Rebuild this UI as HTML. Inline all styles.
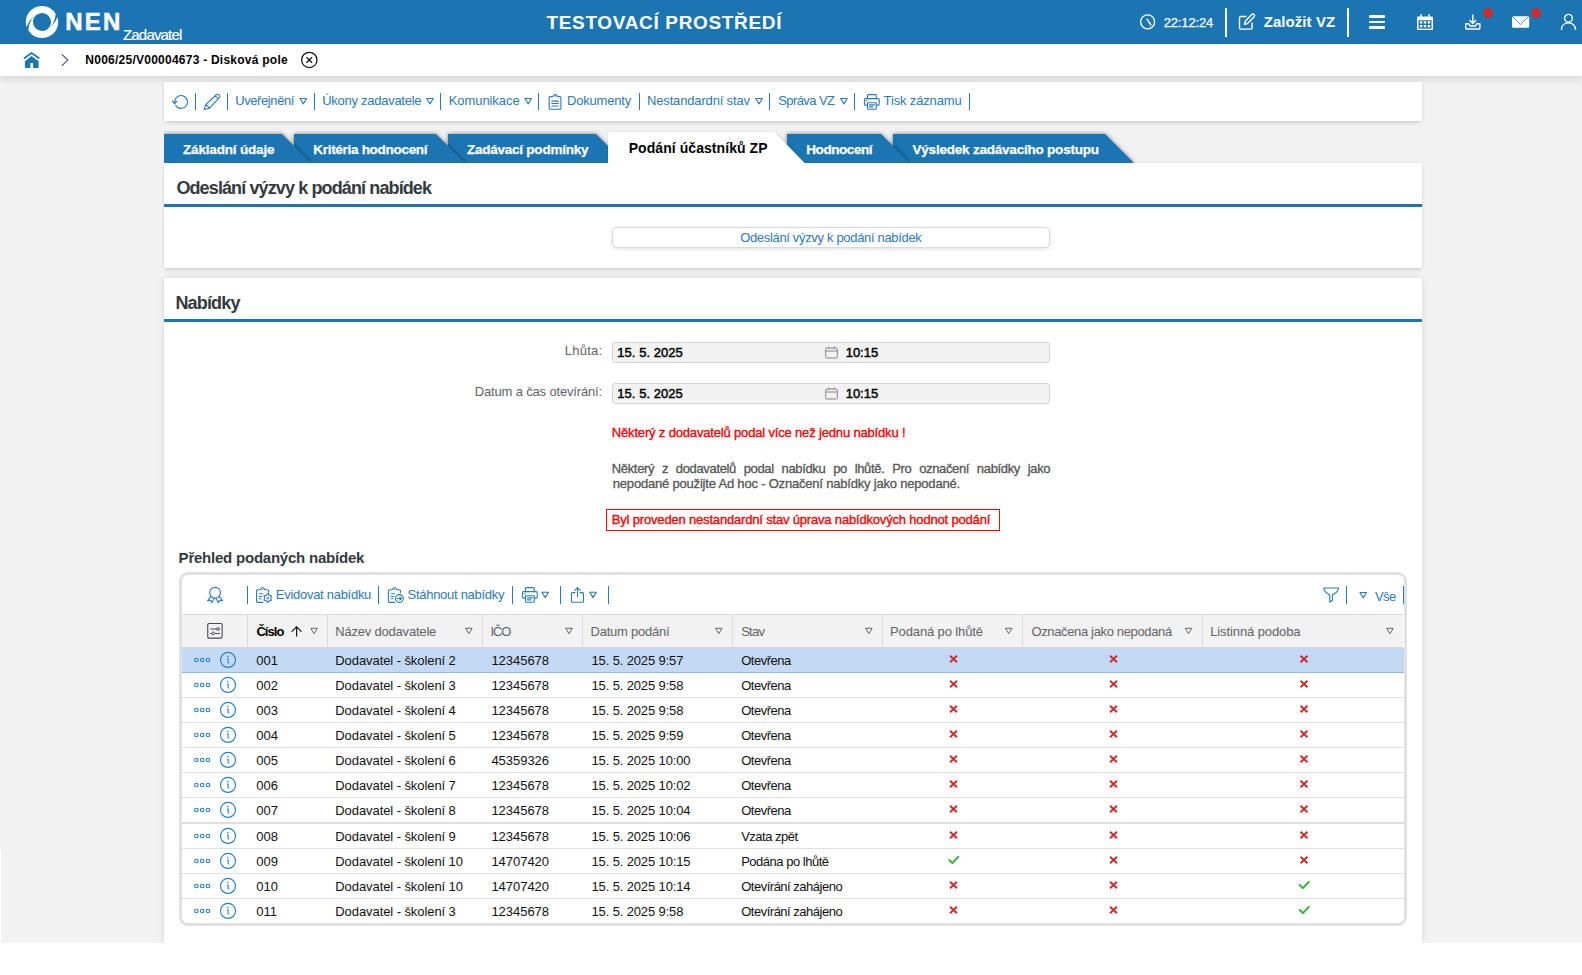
<!DOCTYPE html>
<html lang="cs"><head><meta charset="utf-8"><title>NEN - Zadavatel</title>
<style>
html,body{margin:0;padding:0}
body{width:1582px;height:975px;position:relative;overflow:hidden;background:#fff;font-family:"Liberation Sans",sans-serif}
.t{position:absolute;z-index:40;white-space:pre;line-height:16px;margin:0;font-weight:400;display:block}
h2.t,h3.t{font-weight:700}
.i{position:absolute;overflow:visible;display:block}
.sep{position:absolute;display:block}
.dot{position:absolute;display:block;width:10px;height:10px;border-radius:50%;background:#cc2b2b}
#bg{position:absolute;left:0;top:44px;width:1582px;height:899px;background:#f2f2f2}
#bgfix{position:absolute;left:0;top:849px;width:1px;height:94px;background:#fff}
#top{position:absolute;left:0;top:0;width:1582px;height:44px;background:#1c75b3}
#crumb{position:absolute;left:0;top:44px;width:1582px;height:32px;background:#fff;box-shadow:0 2px 10px rgba(0,0,0,.15)}
.panel{position:absolute;left:164px;width:1258px;background:#fff;box-shadow:0 3px 5px -2px rgba(0,0,0,.17),0 0 3px rgba(0,0,0,.1)}
.hl{position:absolute;left:164px;width:1258px;height:3px;background:#1c75b3}
.tab{position:absolute;top:14px;height:29px;filter:drop-shadow(0 0 2px rgba(0,0,0,.5))}
.tab b{display:block;width:100%;height:100%;background:#1c75b3;clip-path:polygon(0 0,calc(100% - 29px) 0,100% 100%,0 100%)}
.tab.act{top:12px;height:31px;filter:drop-shadow(1px 1px 1.5px rgba(0,0,0,.22))}
.tab.act b{background:#fff;clip-path:polygon(0 0,calc(100% - 30px) 0,100% 100%,0 100%)}
#tabclip{position:absolute;left:164px;top:120px;width:1258px;height:43px;overflow:hidden}
.btn{position:absolute;left:612px;top:227px;width:436px;height:19px;border:1px solid #dadada;border-radius:5px;background:#fff;box-shadow:0 1px 4px rgba(0,0,0,.13)}
.fld{position:absolute;left:612px;width:436px;height:19px;border:1px solid #d4d4d4;border-radius:3px;background:#f2f2f2}
.warn{position:absolute;left:606px;top:509px;width:392px;height:20px;border:1px solid #f00}
#grid{position:absolute;left:179px;top:572px;width:1222px;height:348px;border:3px solid #dfe1e3;border-radius:9px;background:#fff}
#ghead{position:absolute;left:182px;top:614px;width:1221px;height:32px;background:#f2f2f2;border-top:1px solid #dcdcdc;border-bottom:1px solid #d6d6d6}
.row{position:absolute;left:182px;width:1222px;height:24px;border-bottom:1px solid #e0e0e0}
.row.sel{background:#c4d9f4;border-bottom-color:#8fbcee}
</style></head>
<body>
<div id="bg"></div><div id="bgfix"></div>

<nav id="crumb"></nav>
<header id="top"></header>
<div class="hdr">
<svg class="i" style="left:25px;top:5px" width="34" height="34" viewBox="-0.9 -0.8 34 34" ><g fill="#fff"><path id="cr" d="M0.72 21.15A16 16 0 0 1 15.9 0.1A16 16 0 0 1 29.81 8.2Q28.5 19.6 21.92 23.13A9.05 9.05 0 1 0 9.7 9.8Q3.5 13.6 0.72 21.15z"/><path d="M0.72 21.15A16 16 0 0 1 15.9 0.1A16 16 0 0 1 29.81 8.2Q28.5 19.6 21.92 23.13A9.05 9.05 0 1 0 9.7 9.8Q3.5 13.6 0.72 21.15z" transform="rotate(180 16.1 16.2)"/></g></svg>
<span class="t" style="left:65.3px;top:8px;font-size:24px;line-height:27px;color:#fff;font-weight:700;letter-spacing:2.180px;-webkit-text-stroke:0.5px #fff;">NEN</span>
<span class="t" style="left:123.0px;top:26px;font-size:15px;line-height:17px;color:#fff;letter-spacing:-0.818px;-webkit-text-stroke:0.2px #fff;">Zadavatel</span>
<span class="t" style="left:546.5px;top:12px;font-size:19px;line-height:21px;color:#fff;font-weight:700;letter-spacing:0.660px;">TESTOVACÍ PROSTŘEDÍ</span>
<span class="t" style="left:1163.7px;top:15px;font-size:13px;line-height:15px;color:#fff;letter-spacing:-0.153px;-webkit-text-stroke:0.25px #fff;">22:12:24</span>
<span class="t" style="left:1263.7px;top:13px;font-size:15px;line-height:17px;color:#fff;font-weight:700;letter-spacing:0.070px;">Založit VZ</span>
<svg class="i" style="left:1139px;top:13px" width="18" height="18" viewBox="0 0 18 18" ><circle cx="8.6" cy="8.8" r="7" fill="none" stroke="#fff" stroke-width="1.3"/><path d="M8.1 6.3L11.9 12" fill="none" stroke="#fff" stroke-width="1.4" stroke-linecap="round"/></svg><i class="sep" style="left:1225px;top:8px;width:2px;height:29px;background:#fff"></i><svg class="i" style="left:1238px;top:13px" width="19" height="18" viewBox="-0.5 0 19 18" ><path d="M8 3.5H2.3a1.3 1.3 0 0 0-1.3 1.3v10a1.3 1.3 0 0 0 1.3 1.3h10a1.3 1.3 0 0 0 1.3-1.3V9.5" fill="none" stroke="#fff" stroke-width="1.4"/><path d="M13.2 1.6a1.6 1.6 0 0 1 2.4 2.2L9 10.6l-3 .8.7-3.1z" fill="none" stroke="#fff" stroke-width="1.4" stroke-linejoin="round"/></svg><i class="sep" style="left:1347px;top:8px;width:2px;height:29px;background:#fff"></i><i class="sep" style="left:1368.7px;top:15.1px;width:16.3px;height:2.8px;background:#fff;border-radius:1px"></i><i class="sep" style="left:1368.7px;top:20.5px;width:16.3px;height:2.8px;background:#fff;border-radius:1px"></i><i class="sep" style="left:1368.7px;top:25.9px;width:16.3px;height:2.8px;background:#fff;border-radius:1px"></i><svg class="i" style="left:1416px;top:14px" width="18" height="17" viewBox="-0.5 0 18 17" ><path d="M1.5 2.5h14a1 1 0 0 1 1 1v11.5a1 1 0 0 1-1 1h-14a1 1 0 0 1-1-1v-11.5a1 1 0 0 1 1-1z" fill="#fff"/><path d="M4.5 0.3v3M12.5 0.3v3" stroke="#fff" stroke-width="1.6"/><path d="M2 6.2h13v8.5h-13z" fill="#1c75b3"/><path d="M3.4 7.3h2.4v2.2h-2.4zM7.3 7.3h2.4v2.2h-2.4zM11.2 7.3h2.4v2.2h-2.4zM3.4 11h2.4v2.2h-2.4zM7.3 11h2.4v2.2h-2.4zM11.2 11h2.4v2.2h-2.4z" fill="#fff"/><path d="M3.8 1.2v1.8M13.2 1.2v1.8" stroke="#1c75b3" stroke-width="0.01"/></svg><svg class="i" style="left:1464px;top:13px" width="18" height="18" viewBox="-0.5 -0.5 18 18" ><path d="M8.3 1v8.5M5 6.6l3.3 3.3 3.3-3.3" fill="none" stroke="#fff" stroke-width="1.4"/><path d="M1.2 10.3h3.3l1 2.2h5.6l1-2.2h3.3v4.2a1 1 0 0 1-1 1H2.2a1 1 0 0 1-1-1z" fill="none" stroke="#fff" stroke-width="1.4" stroke-linejoin="round"/></svg><i class="dot" style="left:1483px;top:8px"></i><svg class="i" style="left:1512px;top:16px" width="18" height="12" viewBox="0 0 18 12" ><rect x="0" y="0.2" width="17.2" height="11.5" rx="1.5" fill="#fff"/><path d="M0.9 0.9l7.5 7.7 7.8-7.7" fill="none" stroke="#1c75b3" stroke-width="0.75"/></svg><i class="dot" style="left:1531px;top:8px"></i><svg class="i" style="left:1560px;top:13px" width="17" height="18" viewBox="-0.5 -0.5 17 18" ><circle cx="8" cy="4.8" r="3.9" fill="none" stroke="#fff" stroke-width="1.4"/><path d="M0.9 16.4c0-4.5 3.2-7 7.1-7s7.1 2.5 7.1 7" fill="none" stroke="#fff" stroke-width="1.4"/></svg>
</div>

<div class="crumb">
<svg class="i" style="left:23px;top:51px" width="18" height="18" viewBox="0 0 18 18" ><path d="M1.5 7L8.54 2.1 15.8 7" fill="none" stroke="#1c75b3" stroke-width="1.8" stroke-linecap="round" stroke-linejoin="miter"/><path d="M8.54 4.9L15.6 10.3V16.2a.7.7 0 0 1-.7.7H10.1V12H7.4v4.9H2.6a.7.7 0 0 1-.7-.7V10.3z" fill="#1c75b3"/></svg><svg class="i" style="left:60px;top:53px" width="10" height="14" viewBox="0 0 10 14" ><path d="M1.8 1.3l6 5.7-6 5.9" fill="none" stroke="#3b4a66" stroke-width="1.05"/></svg>
<span class="t" style="left:85.3px;top:53px;font-size:12px;line-height:14px;color:#000;font-weight:700;letter-spacing:0.245px;">N006/25/V00004673 - Disková pole</span>
<svg class="i" style="left:301px;top:51px" width="17" height="18" viewBox="0 -0.5 17 18" ><circle cx="8.3" cy="8.45" r="7.65" fill="none" stroke="#111" stroke-width="1.25"/><path d="M5.5 5.65l5.6 5.6M11.1 5.65l-5.6 5.6" stroke="#111" stroke-width="1.3"/></svg>
</div>

<div class="panel" style="top:82px;height:39px"></div>
<div class="toolbar">
<svg class="i" style="left:171px;top:94px" width="19" height="16" viewBox="-0.3 0 19 16" ><path d="M3.53 9.28A6.4 6.4 0 1 1 4.29 11.25" fill="none" stroke="#2a7ab8" stroke-width="1.1" stroke-linecap="round" stroke-linejoin="round"/><path d="M1 7.2l2.35 2.3 2.35-2.3" fill="none" stroke="#2a7ab8" stroke-width="1.1" stroke-linecap="round" stroke-linejoin="round"/></svg><i class="sep" style="left:195px;top:93px;width:1px;height:17px;background:#2a7ab8"></i><svg class="i" style="left:203px;top:93px" width="18" height="18" viewBox="-0.5 -0.5 18 18" ><path d="M13.1 1a2.2 2.2 0 0 1 3 2.9L6 14.7 0.8 16 2.4 10.8zM11.7 2.3l3.2 3M2.4 10.8L6 14.7" fill="none" stroke="#2a7ab8" stroke-width="1.1" stroke-linecap="round" stroke-linejoin="round"/></svg><i class="sep" style="left:227px;top:93px;width:1px;height:17px;background:#2a7ab8"></i><svg class="i" style="left:299px;top:97px" width="9" height="8" viewBox="-0.3 -0.9 9 8" ><path d="M0.7 0.6h6.6L4 6z" fill="none" stroke="#2a7ab8" stroke-width="1.1" stroke-linejoin="round"/></svg><i class="sep" style="left:314px;top:93px;width:1px;height:17px;background:#2a7ab8"></i><svg class="i" style="left:426px;top:97px" width="8" height="8" viewBox="0 -0.9 8 8" ><path d="M0.7 0.6h6.6L4 6z" fill="none" stroke="#2a7ab8" stroke-width="1.1" stroke-linejoin="round"/></svg><i class="sep" style="left:440px;top:93px;width:1px;height:17px;background:#2a7ab8"></i><svg class="i" style="left:524px;top:97px" width="9" height="8" viewBox="-0.2 -0.9 9 8" ><path d="M0.7 0.6h6.6L4 6z" fill="none" stroke="#2a7ab8" stroke-width="1.1" stroke-linejoin="round"/></svg><i class="sep" style="left:538px;top:93px;width:1px;height:17px;background:#2a7ab8"></i><svg class="i" style="left:548px;top:93px" width="15" height="18" viewBox="0 -0.5 15 18" ><path d="M4.4 3.15H2.15a1 1 0 0 0-1 1V14.7a1 1 0 0 0 1 1h9.8a1 1 0 0 0 1-1V4.15a1 1 0 0 0-1-1H9.96M4.4 3.15C5.3 3.15 5.5 1.15 7.2 1.15S9.1 3.15 9.96 3.15" fill="none" stroke="#2a7ab8" stroke-width="1.1" stroke-linecap="round" stroke-linejoin="round"/><circle cx="7.2" cy="3.1" r="0.6" fill="#2a7ab8"/><path d="M3.8 7.6h6.6M3.8 10h6.6M3.8 12.5h6.6" fill="none" stroke="#2a7ab8" stroke-width="1.1" stroke-linecap="round" stroke-linejoin="round"/></svg><i class="sep" style="left:639px;top:93px;width:1px;height:17px;background:#2a7ab8"></i><svg class="i" style="left:755px;top:97px" width="8" height="8" viewBox="0 -0.9 8 8" ><path d="M0.7 0.6h6.6L4 6z" fill="none" stroke="#2a7ab8" stroke-width="1.1" stroke-linejoin="round"/></svg><i class="sep" style="left:769px;top:93px;width:1px;height:17px;background:#2a7ab8"></i><svg class="i" style="left:839px;top:97px" width="9" height="8" viewBox="-0.9 -0.9 9 8" ><path d="M0.7 0.6h6.6L4 6z" fill="none" stroke="#2a7ab8" stroke-width="1.1" stroke-linejoin="round"/></svg><i class="sep" style="left:854px;top:93px;width:1px;height:17px;background:#2a7ab8"></i><svg class="i" style="left:862px;top:93px" width="19" height="18" viewBox="-0.8 -0.5 19 18" ><path d="M4.65 5.15V1.95a.8.8 0 0 1 .8-.8h7.2a.8.8 0 0 1 .8.8v3.2" fill="none" stroke="#2a7ab8" stroke-width="1.1" stroke-linecap="round" stroke-linejoin="round"/><rect x="1.65" y="5.15" width="14.8" height="6.5" rx="1.1" fill="none" stroke="#2a7ab8" stroke-width="1.1" stroke-linecap="round" stroke-linejoin="round"/><path d="M4.65 9.25h8.8v5.7a.8.8 0 0 1-.8.8h-7.2a.8.8 0 0 1-.8-.8z" fill="#fff" stroke="#2a7ab8" stroke-width="1.1" stroke-linejoin="round"/><path d="M6.5 11.4h5.2M6.5 13.4h3.6M3.4 7.25h.9" fill="none" stroke="#2a7ab8" stroke-width="1.1" stroke-linecap="round" stroke-linejoin="round"/></svg><i class="sep" style="left:969px;top:93px;width:1px;height:17px;background:#2a7ab8"></i>
<span class="t" style="left:235.2px;top:93px;font-size:13px;line-height:15px;color:#2a7ab8;letter-spacing:-0.406px;">Uveřejnění</span>
<span class="t" style="left:322.2px;top:93px;font-size:13px;line-height:15px;color:#2a7ab8;letter-spacing:-0.267px;">Úkony zadavatele</span>
<span class="t" style="left:448.7px;top:93px;font-size:13px;line-height:15px;color:#2a7ab8;letter-spacing:-0.068px;">Komunikace</span>
<span class="t" style="left:567.0px;top:93px;font-size:13px;line-height:15px;color:#2a7ab8;letter-spacing:-0.181px;">Dokumenty</span>
<span class="t" style="left:647.0px;top:93px;font-size:13px;line-height:15px;color:#2a7ab8;letter-spacing:-0.157px;">Nestandardní stav</span>
<span class="t" style="left:778.3px;top:93px;font-size:13px;line-height:15px;color:#2a7ab8;letter-spacing:-0.597px;">Správa VZ</span>
<span class="t" style="left:883.6px;top:93px;font-size:13px;line-height:15px;color:#2a7ab8;letter-spacing:-0.153px;">Tisk záznamu</span>
</div>

<div class="panel" style="top:163px;height:105px"></div>
<div class="tabs">
<div id="tabclip"><div class="tab" style="left:0px;width:147px;z-index:20"><b></b></div><div class="tab" style="left:130px;width:171px;z-index:19"><b></b></div><div class="tab" style="left:284px;width:177px;z-index:18"><b></b></div><div class="tab" style="left:623px;width:123px;z-index:17"><b></b></div><div class="tab" style="left:729px;width:241px;z-index:16"><b></b></div><div class="tab act" style="left:444px;width:196.6px;z-index:30"><b></b></div></div>
<span class="t" style="left:183.0px;top:142px;font-size:13.5px;line-height:15px;color:#fff;font-weight:700;letter-spacing:-0.174px;-webkit-text-stroke:0.25px #fff;">Základní údaje</span>
<span class="t" style="left:313.3px;top:142px;font-size:13.5px;line-height:15px;color:#fff;font-weight:700;letter-spacing:-0.295px;-webkit-text-stroke:0.25px #fff;">Kritéria hodnocení</span>
<span class="t" style="left:466.9px;top:142px;font-size:13.5px;line-height:15px;color:#fff;font-weight:700;letter-spacing:-0.230px;-webkit-text-stroke:0.25px #fff;">Zadávací podmínky</span>
<span class="t" style="left:806.3px;top:142px;font-size:13.5px;line-height:15px;color:#fff;font-weight:700;letter-spacing:-0.437px;-webkit-text-stroke:0.25px #fff;">Hodnocení</span>
<span class="t" style="left:912.5px;top:142px;font-size:13.5px;line-height:15px;color:#fff;font-weight:700;letter-spacing:-0.212px;-webkit-text-stroke:0.25px #fff;">Výsledek zadávacího postupu</span>
<span class="t" style="left:628.7px;top:140px;font-size:14px;line-height:16px;color:#000;font-weight:700;letter-spacing:0.064px;">Podání účastníků ZP</span>
</div>
<section class="p1">
<div class="hl" style="top:204px"></div>
<div class="btn"></div>
<h2 class="t" style="left:176.4px;top:178px;font-size:18px;line-height:20px;color:#333a40;font-weight:700;letter-spacing:-0.883px;">Odeslání výzvy k podání nabídek</h2>
<span class="t" style="left:740.2px;top:230px;font-size:13px;line-height:15px;color:#2a7ab8;letter-spacing:-0.330px;">Odeslání výzvy k podání nabídek</span>
</section>

<div class="panel" style="top:278px;height:665px;box-shadow:0 0 6px rgba(0,0,0,.12)"></div>
<div style="position:absolute;left:0;top:943px;width:1582px;height:32px;background:#fff"></div>
<section class="p2">
<div class="hl" style="top:319px"></div>
<div class="fld" style="top:342px"></div>
<div class="fld" style="top:383px"></div>
<svg class="i" style="left:825px;top:346px" width="14" height="13" viewBox="-0.1 -0.3 14 13" ><rect x="0.6" y="1.7" width="11.6" height="10" rx="1" fill="none" stroke="#888" stroke-width="1"/><path d="M0.6 4.7h11.6M3.7 0.3v2.4M9.1 0.3v2.4" stroke="#888" stroke-width="1"/></svg><svg class="i" style="left:825px;top:387px" width="14" height="13" viewBox="-0.1 -0.3 14 13" ><rect x="0.6" y="1.7" width="11.6" height="10" rx="1" fill="none" stroke="#888" stroke-width="1"/><path d="M0.6 4.7h11.6M3.7 0.3v2.4M9.1 0.3v2.4" stroke="#888" stroke-width="1"/></svg>
<div class="warn"></div>
<h2 class="t" style="left:175.4px;top:293px;font-size:18px;line-height:20px;color:#333a40;font-weight:700;letter-spacing:-0.835px;">Nabídky</h2>
<span class="t" style="left:564.7px;top:343px;font-size:13px;line-height:15px;color:#626268;letter-spacing:0.274px;">Lhůta:</span>
<span class="t" style="left:474.7px;top:384px;font-size:13px;line-height:15px;color:#626268;letter-spacing:-0.156px;">Datum a čas otevírání:</span>
<span class="t" style="left:617.3px;top:345px;font-size:13px;line-height:15px;color:#000;letter-spacing:0.037px;-webkit-text-stroke:0.45px #000;">15. 5. 2025</span>
<span class="t" style="left:845.7px;top:345px;font-size:13px;line-height:15px;color:#000;letter-spacing:-0.025px;-webkit-text-stroke:0.45px #000;">10:15</span>
<span class="t" style="left:617.3px;top:386px;font-size:13px;line-height:15px;color:#000;letter-spacing:0.037px;-webkit-text-stroke:0.45px #000;">15. 5. 2025</span>
<span class="t" style="left:845.7px;top:386px;font-size:13px;line-height:15px;color:#000;letter-spacing:-0.025px;-webkit-text-stroke:0.45px #000;">10:15</span>
<span class="t" style="left:611.8px;top:425px;font-size:13px;line-height:15px;color:#f00;letter-spacing:-0.167px;-webkit-text-stroke:0.35px #f00;">Některý z dodavatelů podal více než jednu nabídku !</span>
<span class="t" style="left:611.8px;top:461px;font-size:13px;line-height:15px;color:#555;letter-spacing:-0.350px;word-spacing:4.516px;-webkit-text-stroke:0.3px #555;">Některý z dodavatelů podal nabídku po lhůtě. Pro označení nabídky jako</span>
<span class="t" style="left:612.8px;top:476px;font-size:13px;line-height:15px;color:#555;letter-spacing:-0.196px;-webkit-text-stroke:0.3px #555;">nepodané použijte Ad hoc - Označení nabídky jako nepodané.</span>
<span class="t" style="left:611.8px;top:512px;font-size:13px;line-height:15px;color:#f00;letter-spacing:-0.178px;-webkit-text-stroke:0.35px #f00;">Byl proveden nestandardní stav úprava nabídkových hodnot podání</span>
<h3 class="t" style="left:178.6px;top:549px;font-size:15px;line-height:17px;color:#333a40;font-weight:700;letter-spacing:-0.223px;">Přehled podaných nabídek</h3>
</section>

<div id="grid"></div>
<div class="gtb">
<svg class="i" style="left:206px;top:586px" width="18" height="18" viewBox="-0.5 -0.5 18 18" ><circle cx="8.6" cy="6.3" r="5.4" fill="none" stroke="#2a7ab8" stroke-width="1.1" stroke-linecap="round" stroke-linejoin="round"/><path d="M4.5 9.8L1.2 14.2l3.1-.4 1 2.5 2.6-4.5M12.7 9.8l3.3 4.4-3.1-.4-1 2.5-2.6-4.5" fill="none" stroke="#2a7ab8" stroke-width="1.1" stroke-linecap="round" stroke-linejoin="round"/></svg><i class="sep" style="left:247px;top:586px;width:1px;height:18px;background:#2a7ab8"></i><svg class="i" style="left:255px;top:586px" width="18" height="18" viewBox="-0.5 -0.5 18 18" ><path d="M4.7 3.25H2.05a1 1 0 0 0-1 1V14.85a1 1 0 0 0 1 1H7.3M9.6 3.25h2.45a1 1 0 0 1 1 1V6.7 M4.7 3.25C5.5 3.25 5.6 0.95 7.15 0.95S8.8 3.25 9.6 3.25" fill="none" stroke="#2a7ab8" stroke-width="1.1" stroke-linecap="round" stroke-linejoin="round"/><circle cx="7.1" cy="3.1" r="0.55" fill="#2a7ab8"/><path d="M4 7.3h3.3M3.7 10h2.5M4 12.3h1.6" fill="none" stroke="#2a7ab8" stroke-width="1.1" stroke-linecap="round" stroke-linejoin="round"/><path d="M12.2 7.25L13.72 8.91L15.92 9.4L15.25 11.55L15.92 13.7L13.72 14.19L12.2 15.85L10.68 14.19L8.48 13.7L9.15 11.55L8.48 9.4L10.67 8.91z" fill="none" stroke="#2a7ab8" stroke-width="1.1" stroke-linecap="round" stroke-linejoin="round"/><circle cx="12.2" cy="11.55" r="0.9" fill="none" stroke="#2a7ab8" stroke-width="1"/></svg><i class="sep" style="left:378px;top:586px;width:1px;height:18px;background:#2a7ab8"></i><svg class="i" style="left:387px;top:586px" width="18" height="18" viewBox="-0.35 -0.5 18 18" ><path d="M4.7 3.25H2.05a1 1 0 0 0-1 1V14.85a1 1 0 0 0 1 1H7.3M9.6 3.25h2.45a1 1 0 0 1 1 1V6.1 M4.7 3.25C5.5 3.25 5.6 0.95 7.15 0.95S8.8 3.25 9.6 3.25" fill="none" stroke="#2a7ab8" stroke-width="1.1" stroke-linecap="round" stroke-linejoin="round"/><circle cx="7.1" cy="3.1" r="0.55" fill="#2a7ab8"/><path d="M4 7.3h3.3M3.7 10h2.5M4 12.3h1.6" fill="none" stroke="#2a7ab8" stroke-width="1.1" stroke-linecap="round" stroke-linejoin="round"/><circle cx="12.05" cy="12" r="3.9" fill="none" stroke="#2a7ab8" stroke-width="1.1" stroke-linecap="round" stroke-linejoin="round"/><path d="M9.9 12h4M12.5 10.5l1.6 1.5-1.6 1.5" fill="none" stroke="#2a7ab8" stroke-width="1.1" stroke-linecap="round" stroke-linejoin="round"/></svg><i class="sep" style="left:512px;top:586px;width:1px;height:18px;background:#2a7ab8"></i><svg class="i" style="left:520px;top:586px" width="19" height="18" viewBox="-0.8 -0.5 19 18" ><path d="M4.65 5.15V1.95a.8.8 0 0 1 .8-.8h7.2a.8.8 0 0 1 .8.8v3.2" fill="none" stroke="#2a7ab8" stroke-width="1.1" stroke-linecap="round" stroke-linejoin="round"/><rect x="1.65" y="5.15" width="14.8" height="6.5" rx="1.1" fill="none" stroke="#2a7ab8" stroke-width="1.1" stroke-linecap="round" stroke-linejoin="round"/><path d="M4.65 9.25h8.8v5.7a.8.8 0 0 1-.8.8h-7.2a.8.8 0 0 1-.8-.8z" fill="#fff" stroke="#2a7ab8" stroke-width="1.1" stroke-linejoin="round"/><path d="M6.5 11.4h5.2M6.5 13.4h3.6M3.4 7.25h.9" fill="none" stroke="#2a7ab8" stroke-width="1.1" stroke-linecap="round" stroke-linejoin="round"/></svg><svg class="i" style="left:541px;top:591px" width="9" height="8" viewBox="-0.2 -0.6 9 8" ><path d="M0.7 0.6h6.6L4 6z" fill="none" stroke="#2a7ab8" stroke-width="1.1" stroke-linejoin="round"/></svg><i class="sep" style="left:560px;top:586px;width:1px;height:18px;background:#2a7ab8"></i><svg class="i" style="left:570px;top:586px" width="15" height="18" viewBox="0 0 15 18" ><path d="M5 6.6H2.5a1 1 0 0 0-1 1v7.7a1 1 0 0 0 1 1h10a1 1 0 0 0 1-1V7.6a1 1 0 0 0-1-1H10" fill="none" stroke="#2a7ab8" stroke-width="1.1" stroke-linecap="round" stroke-linejoin="round"/><path d="M7.55 10.8V1.7M4.8 4.3l2.75-2.7 2.75 2.7" fill="none" stroke="#2a7ab8" stroke-width="1.1" stroke-linecap="round" stroke-linejoin="round"/></svg><svg class="i" style="left:589px;top:591px" width="8" height="8" viewBox="0 -0.6 8 8" ><path d="M0.7 0.6h6.6L4 6z" fill="none" stroke="#2a7ab8" stroke-width="1.1" stroke-linejoin="round"/></svg><i class="sep" style="left:608px;top:586px;width:1px;height:18px;background:#2a7ab8"></i><svg class="i" style="left:1322px;top:586px" width="18" height="18" viewBox="-0.5 -0.5 18 18" ><path d="M1.2 1.5H16C16 5.8 12 7 9.95 8.5V13.7L7.25 15.7V8.5C5.2 7 1.2 5.8 1.2 1.5z" fill="none" stroke="#2a7ab8" stroke-width="1.1" stroke-linecap="round" stroke-linejoin="round"/></svg><i class="sep" style="left:1346px;top:586px;width:1px;height:18px;background:#2a7ab8"></i><svg class="i" style="left:1359px;top:591px" width="9" height="8" viewBox="-0.2 -0.9 9 8" ><path d="M0.7 0.6h6.6L4 6z" fill="none" stroke="#2a7ab8" stroke-width="1.1" stroke-linejoin="round"/></svg><i class="sep" style="left:1403px;top:586px;width:1px;height:18px;background:#2a7ab8"></i>
<span class="t" style="left:275.8px;top:587px;font-size:13px;line-height:15px;color:#2a7ab8;letter-spacing:-0.280px;">Evidovat nabídku</span>
<span class="t" style="left:407.5px;top:587px;font-size:13px;line-height:15px;color:#2a7ab8;letter-spacing:-0.279px;">Stáhnout nabídky</span>
<span class="t" style="left:1375.0px;top:589px;font-size:13px;line-height:15px;color:#2a7ab8;letter-spacing:-0.585px;">Vše</span>
</div>
<div id="ghead"></div>
<div class="ghd">
<i class="sep" style="left:246.9px;top:615px;width:1px;height:32px;background:#dcdcdc"></i><i class="sep" style="left:327px;top:615px;width:1px;height:32px;background:#dcdcdc"></i><i class="sep" style="left:482px;top:615px;width:1px;height:32px;background:#dcdcdc"></i><i class="sep" style="left:581.9px;top:615px;width:1px;height:32px;background:#dcdcdc"></i><i class="sep" style="left:731.8px;top:615px;width:1px;height:32px;background:#dcdcdc"></i><i class="sep" style="left:881.8px;top:615px;width:1px;height:32px;background:#dcdcdc"></i><i class="sep" style="left:1021.5px;top:615px;width:1px;height:32px;background:#dcdcdc"></i><i class="sep" style="left:1201.8px;top:615px;width:1px;height:32px;background:#dcdcdc"></i><svg class="i" style="left:310px;top:627px" width="9" height="8" viewBox="-0.1 -0.7 9 8" ><path d="M0.7 0.6h6.6L4 6z" fill="none" stroke="#666" stroke-width="1" stroke-linejoin="round"/></svg><svg class="i" style="left:464px;top:627px" width="9" height="8" viewBox="-0.9 -0.7 9 8" ><path d="M0.7 0.6h6.6L4 6z" fill="none" stroke="#666" stroke-width="1" stroke-linejoin="round"/></svg><svg class="i" style="left:565px;top:627px" width="8" height="8" viewBox="-0 -0.7 8 8" ><path d="M0.7 0.6h6.6L4 6z" fill="none" stroke="#666" stroke-width="1" stroke-linejoin="round"/></svg><svg class="i" style="left:714px;top:627px" width="9" height="8" viewBox="-0.8 -0.7 9 8" ><path d="M0.7 0.6h6.6L4 6z" fill="none" stroke="#666" stroke-width="1" stroke-linejoin="round"/></svg><svg class="i" style="left:864px;top:627px" width="9" height="8" viewBox="-0.9 -0.7 9 8" ><path d="M0.7 0.6h6.6L4 6z" fill="none" stroke="#666" stroke-width="1" stroke-linejoin="round"/></svg><svg class="i" style="left:1004px;top:627px" width="9" height="8" viewBox="-0.7 -0.7 9 8" ><path d="M0.7 0.6h6.6L4 6z" fill="none" stroke="#666" stroke-width="1" stroke-linejoin="round"/></svg><svg class="i" style="left:1184px;top:627px" width="9" height="8" viewBox="-0.5 -0.7 9 8" ><path d="M0.7 0.6h6.6L4 6z" fill="none" stroke="#666" stroke-width="1" stroke-linejoin="round"/></svg><svg class="i" style="left:1385px;top:627px" width="9" height="8" viewBox="-0.9 -0.7 9 8" ><path d="M0.7 0.6h6.6L4 6z" fill="none" stroke="#666" stroke-width="1" stroke-linejoin="round"/></svg><svg class="i" style="left:206px;top:622px" width="18" height="18" viewBox="-0.5 -0.5 18 18" ><rect x="1.25" y="1.05" width="14.4" height="14.6" rx="1.2" fill="none" stroke="#4a4a55" stroke-width="1.1"/><path d="M3.8 6.5h6.2M12.8 6.5h.6M3.8 10.9h1.4M8 10.9h5.4" stroke="#4a4a55" stroke-width="1.05"/><circle cx="11.4" cy="6.5" r="1.35" fill="none" stroke="#4a4a55" stroke-width="1"/><circle cx="6.6" cy="10.9" r="1.35" fill="none" stroke="#4a4a55" stroke-width="1"/></svg><svg class="i" style="left:290px;top:624px" width="14" height="14" viewBox="-0.8 -0.8 14 14" ><path d="M5.8 11.7V2.2M0.9 6.9L5.8 2l4.9 4.9" fill="none" stroke="#111" stroke-width="1.15"/></svg>
<span class="t" style="left:256.4px;top:624px;font-size:13px;line-height:15px;color:#000;font-weight:700;letter-spacing:-0.960px;">Číslo</span>
<span class="t" style="left:335.2px;top:624px;font-size:13px;line-height:15px;color:#626268;letter-spacing:-0.196px;">Název dodavatele</span>
<span class="t" style="left:490.4px;top:624px;font-size:13px;line-height:15px;color:#626268;letter-spacing:-1.050px;">IČO</span>
<span class="t" style="left:590.5px;top:624px;font-size:13px;line-height:15px;color:#626268;letter-spacing:-0.232px;">Datum podání</span>
<span class="t" style="left:741.2px;top:624px;font-size:13px;line-height:15px;color:#626268;letter-spacing:-0.738px;">Stav</span>
<span class="t" style="left:890.0px;top:624px;font-size:13px;line-height:15px;color:#626268;letter-spacing:-0.119px;">Podaná po lhůtě</span>
<span class="t" style="left:1031.4px;top:624px;font-size:13px;line-height:15px;color:#626268;letter-spacing:-0.350px;">Označena jako nepodaná</span>
<span class="t" style="left:1210.2px;top:624px;font-size:13px;line-height:15px;color:#626268;letter-spacing:-0.105px;">Listinná podoba</span>
</div>
<div class="rows">
<div class="row sel" style="top:648px"></div><svg class="i" style="left:193px;top:653px" width="19" height="14" viewBox="-0.6 -0.8 19 14" ><circle cx="2.8" cy="6.2" r="1.75" fill="none" stroke="#2380c6" stroke-width="1.15"/><circle cx="8.6" cy="6.2" r="1.75" fill="none" stroke="#2380c6" stroke-width="1.15"/><circle cx="14.4" cy="6.2" r="1.75" fill="none" stroke="#2380c6" stroke-width="1.15"/></svg><svg class="i" style="left:219px;top:651px" width="18" height="18" viewBox="-0.5 -0.55 18 18" ><circle cx="8.5" cy="8.4" r="7.5" fill="none" stroke="#2380c6" stroke-width="1.15"/><path d="M7.5 7.4h1.1v3.3q0 .9 1.2.9" fill="none" stroke="#2380c6" stroke-width="1.1"/><circle cx="8.3" cy="4.9" r="0.8" fill="#2380c6"/></svg><svg class="i" style="left:948px;top:654px" width="11" height="10" viewBox="-0.5 0 11 10" ><path d="M1.55 1.7l6.9 6.6M8.45 1.7l-6.9 6.6" stroke="#cf2a2a" stroke-width="1.9"/></svg><svg class="i" style="left:1108px;top:654px" width="11" height="10" viewBox="-0.5 0 11 10" ><path d="M1.55 1.7l6.9 6.6M8.45 1.7l-6.9 6.6" stroke="#cf2a2a" stroke-width="1.9"/></svg><svg class="i" style="left:1299px;top:654px" width="10" height="10" viewBox="0 0 10 10" ><path d="M1.55 1.7l6.9 6.6M8.45 1.7l-6.9 6.6" stroke="#cf2a2a" stroke-width="1.9"/></svg><div class="row" style="top:673px"></div><svg class="i" style="left:193px;top:678px" width="19" height="14" viewBox="-0.6 -0.8 19 14" ><circle cx="2.8" cy="6.2" r="1.75" fill="none" stroke="#2380c6" stroke-width="1.15"/><circle cx="8.6" cy="6.2" r="1.75" fill="none" stroke="#2380c6" stroke-width="1.15"/><circle cx="14.4" cy="6.2" r="1.75" fill="none" stroke="#2380c6" stroke-width="1.15"/></svg><svg class="i" style="left:219px;top:676px" width="18" height="18" viewBox="-0.5 -0.55 18 18" ><circle cx="8.5" cy="8.4" r="7.5" fill="none" stroke="#2380c6" stroke-width="1.15"/><path d="M7.5 7.4h1.1v3.3q0 .9 1.2.9" fill="none" stroke="#2380c6" stroke-width="1.1"/><circle cx="8.3" cy="4.9" r="0.8" fill="#2380c6"/></svg><svg class="i" style="left:948px;top:679px" width="11" height="10" viewBox="-0.5 0 11 10" ><path d="M1.55 1.7l6.9 6.6M8.45 1.7l-6.9 6.6" stroke="#cf2a2a" stroke-width="1.9"/></svg><svg class="i" style="left:1108px;top:679px" width="11" height="10" viewBox="-0.5 0 11 10" ><path d="M1.55 1.7l6.9 6.6M8.45 1.7l-6.9 6.6" stroke="#cf2a2a" stroke-width="1.9"/></svg><svg class="i" style="left:1299px;top:679px" width="10" height="10" viewBox="0 0 10 10" ><path d="M1.55 1.7l6.9 6.6M8.45 1.7l-6.9 6.6" stroke="#cf2a2a" stroke-width="1.9"/></svg><div class="row" style="top:698px"></div><svg class="i" style="left:193px;top:703px" width="19" height="14" viewBox="-0.6 -0.8 19 14" ><circle cx="2.8" cy="6.2" r="1.75" fill="none" stroke="#2380c6" stroke-width="1.15"/><circle cx="8.6" cy="6.2" r="1.75" fill="none" stroke="#2380c6" stroke-width="1.15"/><circle cx="14.4" cy="6.2" r="1.75" fill="none" stroke="#2380c6" stroke-width="1.15"/></svg><svg class="i" style="left:219px;top:701px" width="18" height="18" viewBox="-0.5 -0.55 18 18" ><circle cx="8.5" cy="8.4" r="7.5" fill="none" stroke="#2380c6" stroke-width="1.15"/><path d="M7.5 7.4h1.1v3.3q0 .9 1.2.9" fill="none" stroke="#2380c6" stroke-width="1.1"/><circle cx="8.3" cy="4.9" r="0.8" fill="#2380c6"/></svg><svg class="i" style="left:948px;top:704px" width="11" height="10" viewBox="-0.5 0 11 10" ><path d="M1.55 1.7l6.9 6.6M8.45 1.7l-6.9 6.6" stroke="#cf2a2a" stroke-width="1.9"/></svg><svg class="i" style="left:1108px;top:704px" width="11" height="10" viewBox="-0.5 0 11 10" ><path d="M1.55 1.7l6.9 6.6M8.45 1.7l-6.9 6.6" stroke="#cf2a2a" stroke-width="1.9"/></svg><svg class="i" style="left:1299px;top:704px" width="10" height="10" viewBox="0 0 10 10" ><path d="M1.55 1.7l6.9 6.6M8.45 1.7l-6.9 6.6" stroke="#cf2a2a" stroke-width="1.9"/></svg><div class="row" style="top:723px"></div><svg class="i" style="left:193px;top:728px" width="19" height="14" viewBox="-0.6 -0.8 19 14" ><circle cx="2.8" cy="6.2" r="1.75" fill="none" stroke="#2380c6" stroke-width="1.15"/><circle cx="8.6" cy="6.2" r="1.75" fill="none" stroke="#2380c6" stroke-width="1.15"/><circle cx="14.4" cy="6.2" r="1.75" fill="none" stroke="#2380c6" stroke-width="1.15"/></svg><svg class="i" style="left:219px;top:726px" width="18" height="18" viewBox="-0.5 -0.55 18 18" ><circle cx="8.5" cy="8.4" r="7.5" fill="none" stroke="#2380c6" stroke-width="1.15"/><path d="M7.5 7.4h1.1v3.3q0 .9 1.2.9" fill="none" stroke="#2380c6" stroke-width="1.1"/><circle cx="8.3" cy="4.9" r="0.8" fill="#2380c6"/></svg><svg class="i" style="left:948px;top:729px" width="11" height="10" viewBox="-0.5 0 11 10" ><path d="M1.55 1.7l6.9 6.6M8.45 1.7l-6.9 6.6" stroke="#cf2a2a" stroke-width="1.9"/></svg><svg class="i" style="left:1108px;top:729px" width="11" height="10" viewBox="-0.5 0 11 10" ><path d="M1.55 1.7l6.9 6.6M8.45 1.7l-6.9 6.6" stroke="#cf2a2a" stroke-width="1.9"/></svg><svg class="i" style="left:1299px;top:729px" width="10" height="10" viewBox="0 0 10 10" ><path d="M1.55 1.7l6.9 6.6M8.45 1.7l-6.9 6.6" stroke="#cf2a2a" stroke-width="1.9"/></svg><div class="row" style="top:748px"></div><svg class="i" style="left:193px;top:753px" width="19" height="14" viewBox="-0.6 -0.8 19 14" ><circle cx="2.8" cy="6.2" r="1.75" fill="none" stroke="#2380c6" stroke-width="1.15"/><circle cx="8.6" cy="6.2" r="1.75" fill="none" stroke="#2380c6" stroke-width="1.15"/><circle cx="14.4" cy="6.2" r="1.75" fill="none" stroke="#2380c6" stroke-width="1.15"/></svg><svg class="i" style="left:219px;top:751px" width="18" height="18" viewBox="-0.5 -0.55 18 18" ><circle cx="8.5" cy="8.4" r="7.5" fill="none" stroke="#2380c6" stroke-width="1.15"/><path d="M7.5 7.4h1.1v3.3q0 .9 1.2.9" fill="none" stroke="#2380c6" stroke-width="1.1"/><circle cx="8.3" cy="4.9" r="0.8" fill="#2380c6"/></svg><svg class="i" style="left:948px;top:754px" width="11" height="10" viewBox="-0.5 0 11 10" ><path d="M1.55 1.7l6.9 6.6M8.45 1.7l-6.9 6.6" stroke="#cf2a2a" stroke-width="1.9"/></svg><svg class="i" style="left:1108px;top:754px" width="11" height="10" viewBox="-0.5 0 11 10" ><path d="M1.55 1.7l6.9 6.6M8.45 1.7l-6.9 6.6" stroke="#cf2a2a" stroke-width="1.9"/></svg><svg class="i" style="left:1299px;top:754px" width="10" height="10" viewBox="0 0 10 10" ><path d="M1.55 1.7l6.9 6.6M8.45 1.7l-6.9 6.6" stroke="#cf2a2a" stroke-width="1.9"/></svg><div class="row" style="top:773px"></div><svg class="i" style="left:193px;top:778px" width="19" height="14" viewBox="-0.6 -0.8 19 14" ><circle cx="2.8" cy="6.2" r="1.75" fill="none" stroke="#2380c6" stroke-width="1.15"/><circle cx="8.6" cy="6.2" r="1.75" fill="none" stroke="#2380c6" stroke-width="1.15"/><circle cx="14.4" cy="6.2" r="1.75" fill="none" stroke="#2380c6" stroke-width="1.15"/></svg><svg class="i" style="left:219px;top:776px" width="18" height="18" viewBox="-0.5 -0.55 18 18" ><circle cx="8.5" cy="8.4" r="7.5" fill="none" stroke="#2380c6" stroke-width="1.15"/><path d="M7.5 7.4h1.1v3.3q0 .9 1.2.9" fill="none" stroke="#2380c6" stroke-width="1.1"/><circle cx="8.3" cy="4.9" r="0.8" fill="#2380c6"/></svg><svg class="i" style="left:948px;top:779px" width="11" height="10" viewBox="-0.5 0 11 10" ><path d="M1.55 1.7l6.9 6.6M8.45 1.7l-6.9 6.6" stroke="#cf2a2a" stroke-width="1.9"/></svg><svg class="i" style="left:1108px;top:779px" width="11" height="10" viewBox="-0.5 0 11 10" ><path d="M1.55 1.7l6.9 6.6M8.45 1.7l-6.9 6.6" stroke="#cf2a2a" stroke-width="1.9"/></svg><svg class="i" style="left:1299px;top:779px" width="10" height="10" viewBox="0 0 10 10" ><path d="M1.55 1.7l6.9 6.6M8.45 1.7l-6.9 6.6" stroke="#cf2a2a" stroke-width="1.9"/></svg><div class="row" style="top:798px"></div><svg class="i" style="left:193px;top:803px" width="19" height="14" viewBox="-0.6 -0.8 19 14" ><circle cx="2.8" cy="6.2" r="1.75" fill="none" stroke="#2380c6" stroke-width="1.15"/><circle cx="8.6" cy="6.2" r="1.75" fill="none" stroke="#2380c6" stroke-width="1.15"/><circle cx="14.4" cy="6.2" r="1.75" fill="none" stroke="#2380c6" stroke-width="1.15"/></svg><svg class="i" style="left:219px;top:801px" width="18" height="18" viewBox="-0.5 -0.55 18 18" ><circle cx="8.5" cy="8.4" r="7.5" fill="none" stroke="#2380c6" stroke-width="1.15"/><path d="M7.5 7.4h1.1v3.3q0 .9 1.2.9" fill="none" stroke="#2380c6" stroke-width="1.1"/><circle cx="8.3" cy="4.9" r="0.8" fill="#2380c6"/></svg><svg class="i" style="left:948px;top:804px" width="11" height="10" viewBox="-0.5 0 11 10" ><path d="M1.55 1.7l6.9 6.6M8.45 1.7l-6.9 6.6" stroke="#cf2a2a" stroke-width="1.9"/></svg><svg class="i" style="left:1108px;top:804px" width="11" height="10" viewBox="-0.5 0 11 10" ><path d="M1.55 1.7l6.9 6.6M8.45 1.7l-6.9 6.6" stroke="#cf2a2a" stroke-width="1.9"/></svg><svg class="i" style="left:1299px;top:804px" width="10" height="10" viewBox="0 0 10 10" ><path d="M1.55 1.7l6.9 6.6M8.45 1.7l-6.9 6.6" stroke="#cf2a2a" stroke-width="1.9"/></svg><div class="row" style="top:824px"></div><svg class="i" style="left:193px;top:829px" width="19" height="14" viewBox="-0.6 -0.8 19 14" ><circle cx="2.8" cy="6.2" r="1.75" fill="none" stroke="#2380c6" stroke-width="1.15"/><circle cx="8.6" cy="6.2" r="1.75" fill="none" stroke="#2380c6" stroke-width="1.15"/><circle cx="14.4" cy="6.2" r="1.75" fill="none" stroke="#2380c6" stroke-width="1.15"/></svg><svg class="i" style="left:219px;top:827px" width="18" height="18" viewBox="-0.5 -0.55 18 18" ><circle cx="8.5" cy="8.4" r="7.5" fill="none" stroke="#2380c6" stroke-width="1.15"/><path d="M7.5 7.4h1.1v3.3q0 .9 1.2.9" fill="none" stroke="#2380c6" stroke-width="1.1"/><circle cx="8.3" cy="4.9" r="0.8" fill="#2380c6"/></svg><svg class="i" style="left:948px;top:830px" width="11" height="10" viewBox="-0.5 0 11 10" ><path d="M1.55 1.7l6.9 6.6M8.45 1.7l-6.9 6.6" stroke="#cf2a2a" stroke-width="1.9"/></svg><svg class="i" style="left:1108px;top:830px" width="11" height="10" viewBox="-0.5 0 11 10" ><path d="M1.55 1.7l6.9 6.6M8.45 1.7l-6.9 6.6" stroke="#cf2a2a" stroke-width="1.9"/></svg><svg class="i" style="left:1299px;top:830px" width="10" height="10" viewBox="0 0 10 10" ><path d="M1.55 1.7l6.9 6.6M8.45 1.7l-6.9 6.6" stroke="#cf2a2a" stroke-width="1.9"/></svg><div class="row" style="top:849px"></div><svg class="i" style="left:193px;top:854px" width="19" height="14" viewBox="-0.6 -0.8 19 14" ><circle cx="2.8" cy="6.2" r="1.75" fill="none" stroke="#2380c6" stroke-width="1.15"/><circle cx="8.6" cy="6.2" r="1.75" fill="none" stroke="#2380c6" stroke-width="1.15"/><circle cx="14.4" cy="6.2" r="1.75" fill="none" stroke="#2380c6" stroke-width="1.15"/></svg><svg class="i" style="left:219px;top:852px" width="18" height="18" viewBox="-0.5 -0.55 18 18" ><circle cx="8.5" cy="8.4" r="7.5" fill="none" stroke="#2380c6" stroke-width="1.15"/><path d="M7.5 7.4h1.1v3.3q0 .9 1.2.9" fill="none" stroke="#2380c6" stroke-width="1.1"/><circle cx="8.3" cy="4.9" r="0.8" fill="#2380c6"/></svg><svg class="i" style="left:947px;top:855px" width="13" height="10" viewBox="-0.5 0 13 10" ><path d="M1.7 5l3.2 3.2 5.9-6.4" fill="none" stroke="#2db432" stroke-width="1.9" stroke-linecap="round" stroke-linejoin="round"/></svg><svg class="i" style="left:1108px;top:855px" width="11" height="10" viewBox="-0.5 0 11 10" ><path d="M1.55 1.7l6.9 6.6M8.45 1.7l-6.9 6.6" stroke="#cf2a2a" stroke-width="1.9"/></svg><svg class="i" style="left:1299px;top:855px" width="10" height="10" viewBox="0 0 10 10" ><path d="M1.55 1.7l6.9 6.6M8.45 1.7l-6.9 6.6" stroke="#cf2a2a" stroke-width="1.9"/></svg><div class="row" style="top:874px"></div><svg class="i" style="left:193px;top:879px" width="19" height="14" viewBox="-0.6 -0.8 19 14" ><circle cx="2.8" cy="6.2" r="1.75" fill="none" stroke="#2380c6" stroke-width="1.15"/><circle cx="8.6" cy="6.2" r="1.75" fill="none" stroke="#2380c6" stroke-width="1.15"/><circle cx="14.4" cy="6.2" r="1.75" fill="none" stroke="#2380c6" stroke-width="1.15"/></svg><svg class="i" style="left:219px;top:877px" width="18" height="18" viewBox="-0.5 -0.55 18 18" ><circle cx="8.5" cy="8.4" r="7.5" fill="none" stroke="#2380c6" stroke-width="1.15"/><path d="M7.5 7.4h1.1v3.3q0 .9 1.2.9" fill="none" stroke="#2380c6" stroke-width="1.1"/><circle cx="8.3" cy="4.9" r="0.8" fill="#2380c6"/></svg><svg class="i" style="left:948px;top:880px" width="11" height="10" viewBox="-0.5 0 11 10" ><path d="M1.55 1.7l6.9 6.6M8.45 1.7l-6.9 6.6" stroke="#cf2a2a" stroke-width="1.9"/></svg><svg class="i" style="left:1108px;top:880px" width="11" height="10" viewBox="-0.5 0 11 10" ><path d="M1.55 1.7l6.9 6.6M8.45 1.7l-6.9 6.6" stroke="#cf2a2a" stroke-width="1.9"/></svg><svg class="i" style="left:1298px;top:880px" width="12" height="10" viewBox="0 0 12 10" ><path d="M1.7 5l3.2 3.2 5.9-6.4" fill="none" stroke="#2db432" stroke-width="1.9" stroke-linecap="round" stroke-linejoin="round"/></svg><div class="row" style="top:899px"></div><svg class="i" style="left:193px;top:904px" width="19" height="14" viewBox="-0.6 -0.8 19 14" ><circle cx="2.8" cy="6.2" r="1.75" fill="none" stroke="#2380c6" stroke-width="1.15"/><circle cx="8.6" cy="6.2" r="1.75" fill="none" stroke="#2380c6" stroke-width="1.15"/><circle cx="14.4" cy="6.2" r="1.75" fill="none" stroke="#2380c6" stroke-width="1.15"/></svg><svg class="i" style="left:219px;top:902px" width="18" height="18" viewBox="-0.5 -0.55 18 18" ><circle cx="8.5" cy="8.4" r="7.5" fill="none" stroke="#2380c6" stroke-width="1.15"/><path d="M7.5 7.4h1.1v3.3q0 .9 1.2.9" fill="none" stroke="#2380c6" stroke-width="1.1"/><circle cx="8.3" cy="4.9" r="0.8" fill="#2380c6"/></svg><svg class="i" style="left:948px;top:905px" width="11" height="10" viewBox="-0.5 0 11 10" ><path d="M1.55 1.7l6.9 6.6M8.45 1.7l-6.9 6.6" stroke="#cf2a2a" stroke-width="1.9"/></svg><svg class="i" style="left:1108px;top:905px" width="11" height="10" viewBox="-0.5 0 11 10" ><path d="M1.55 1.7l6.9 6.6M8.45 1.7l-6.9 6.6" stroke="#cf2a2a" stroke-width="1.9"/></svg><svg class="i" style="left:1298px;top:905px" width="12" height="10" viewBox="0 0 12 10" ><path d="M1.7 5l3.2 3.2 5.9-6.4" fill="none" stroke="#2db432" stroke-width="1.9" stroke-linecap="round" stroke-linejoin="round"/></svg><i class="sep" style="left:182px;top:822px;width:1222px;height:2px;background:#dedede"></i>
<span class="t c0" style="left:256.2px;top:653px;font-size:13px;line-height:15px;color:#111;letter-spacing:0.070px;">001</span>
<span class="t c1" style="left:335.3px;top:653px;font-size:13px;line-height:15px;color:#111;letter-spacing:-0.080px;">Dodavatel - školení 2</span>
<span class="t c2" style="left:491.4px;top:653px;font-size:13px;line-height:15px;color:#111;letter-spacing:-0.030px;">12345678</span>
<span class="t c3" style="left:591.5px;top:653px;font-size:13px;line-height:15px;color:#111;letter-spacing:-0.136px;">15. 5. 2025 9:57</span>
<span class="t c4" style="left:741.2px;top:653px;font-size:13px;line-height:15px;color:#111;letter-spacing:-0.492px;">Otevřena</span>
<span class="t c0" style="left:256.2px;top:678px;font-size:13px;line-height:15px;color:#111;letter-spacing:0.070px;">002</span>
<span class="t c1" style="left:335.3px;top:678px;font-size:13px;line-height:15px;color:#111;letter-spacing:-0.080px;">Dodavatel - školení 3</span>
<span class="t c2" style="left:491.4px;top:678px;font-size:13px;line-height:15px;color:#111;letter-spacing:-0.030px;">12345678</span>
<span class="t c3" style="left:591.5px;top:678px;font-size:13px;line-height:15px;color:#111;letter-spacing:-0.136px;">15. 5. 2025 9:58</span>
<span class="t c4" style="left:741.2px;top:678px;font-size:13px;line-height:15px;color:#111;letter-spacing:-0.492px;">Otevřena</span>
<span class="t c0" style="left:256.2px;top:703px;font-size:13px;line-height:15px;color:#111;letter-spacing:0.070px;">003</span>
<span class="t c1" style="left:335.3px;top:703px;font-size:13px;line-height:15px;color:#111;letter-spacing:-0.080px;">Dodavatel - školení 4</span>
<span class="t c2" style="left:491.4px;top:703px;font-size:13px;line-height:15px;color:#111;letter-spacing:-0.030px;">12345678</span>
<span class="t c3" style="left:591.5px;top:703px;font-size:13px;line-height:15px;color:#111;letter-spacing:-0.136px;">15. 5. 2025 9:58</span>
<span class="t c4" style="left:741.2px;top:703px;font-size:13px;line-height:15px;color:#111;letter-spacing:-0.492px;">Otevřena</span>
<span class="t c0" style="left:256.2px;top:728px;font-size:13px;line-height:15px;color:#111;letter-spacing:0.070px;">004</span>
<span class="t c1" style="left:335.3px;top:728px;font-size:13px;line-height:15px;color:#111;letter-spacing:-0.080px;">Dodavatel - školení 5</span>
<span class="t c2" style="left:491.4px;top:728px;font-size:13px;line-height:15px;color:#111;letter-spacing:-0.030px;">12345678</span>
<span class="t c3" style="left:591.5px;top:728px;font-size:13px;line-height:15px;color:#111;letter-spacing:-0.136px;">15. 5. 2025 9:59</span>
<span class="t c4" style="left:741.2px;top:728px;font-size:13px;line-height:15px;color:#111;letter-spacing:-0.492px;">Otevřena</span>
<span class="t c0" style="left:256.2px;top:753px;font-size:13px;line-height:15px;color:#111;letter-spacing:0.070px;">005</span>
<span class="t c1" style="left:335.3px;top:753px;font-size:13px;line-height:15px;color:#111;letter-spacing:-0.080px;">Dodavatel - školení 6</span>
<span class="t c2" style="left:491.4px;top:753px;font-size:13px;line-height:15px;color:#111;letter-spacing:-0.030px;">45359326</span>
<span class="t c3" style="left:591.5px;top:753px;font-size:13px;line-height:15px;color:#111;letter-spacing:-0.136px;">15. 5. 2025 10:00</span>
<span class="t c4" style="left:741.2px;top:753px;font-size:13px;line-height:15px;color:#111;letter-spacing:-0.492px;">Otevřena</span>
<span class="t c0" style="left:256.2px;top:778px;font-size:13px;line-height:15px;color:#111;letter-spacing:0.070px;">006</span>
<span class="t c1" style="left:335.3px;top:778px;font-size:13px;line-height:15px;color:#111;letter-spacing:-0.080px;">Dodavatel - školení 7</span>
<span class="t c2" style="left:491.4px;top:778px;font-size:13px;line-height:15px;color:#111;letter-spacing:-0.030px;">12345678</span>
<span class="t c3" style="left:591.5px;top:778px;font-size:13px;line-height:15px;color:#111;letter-spacing:-0.136px;">15. 5. 2025 10:02</span>
<span class="t c4" style="left:741.2px;top:778px;font-size:13px;line-height:15px;color:#111;letter-spacing:-0.492px;">Otevřena</span>
<span class="t c0" style="left:256.2px;top:803px;font-size:13px;line-height:15px;color:#111;letter-spacing:0.070px;">007</span>
<span class="t c1" style="left:335.3px;top:803px;font-size:13px;line-height:15px;color:#111;letter-spacing:-0.080px;">Dodavatel - školení 8</span>
<span class="t c2" style="left:491.4px;top:803px;font-size:13px;line-height:15px;color:#111;letter-spacing:-0.030px;">12345678</span>
<span class="t c3" style="left:591.5px;top:803px;font-size:13px;line-height:15px;color:#111;letter-spacing:-0.136px;">15. 5. 2025 10:04</span>
<span class="t c4" style="left:741.2px;top:803px;font-size:13px;line-height:15px;color:#111;letter-spacing:-0.492px;">Otevřena</span>
<span class="t c0" style="left:256.2px;top:829px;font-size:13px;line-height:15px;color:#111;letter-spacing:0.070px;">008</span>
<span class="t c1" style="left:335.3px;top:829px;font-size:13px;line-height:15px;color:#111;letter-spacing:-0.080px;">Dodavatel - školení 9</span>
<span class="t c2" style="left:491.4px;top:829px;font-size:13px;line-height:15px;color:#111;letter-spacing:-0.030px;">12345678</span>
<span class="t c3" style="left:591.5px;top:829px;font-size:13px;line-height:15px;color:#111;letter-spacing:-0.136px;">15. 5. 2025 10:06</span>
<span class="t c4" style="left:741.2px;top:829px;font-size:13px;line-height:15px;color:#111;letter-spacing:-0.492px;">Vzata zpět</span>
<span class="t c0" style="left:256.2px;top:854px;font-size:13px;line-height:15px;color:#111;letter-spacing:0.070px;">009</span>
<span class="t c1" style="left:335.3px;top:854px;font-size:13px;line-height:15px;color:#111;letter-spacing:-0.080px;">Dodavatel - školení 10</span>
<span class="t c2" style="left:491.4px;top:854px;font-size:13px;line-height:15px;color:#111;letter-spacing:-0.030px;">14707420</span>
<span class="t c3" style="left:591.5px;top:854px;font-size:13px;line-height:15px;color:#111;letter-spacing:-0.136px;">15. 5. 2025 10:15</span>
<span class="t c4" style="left:741.2px;top:854px;font-size:13px;line-height:15px;color:#111;letter-spacing:-0.492px;">Podána po lhůtě</span>
<span class="t c0" style="left:256.2px;top:879px;font-size:13px;line-height:15px;color:#111;letter-spacing:0.070px;">010</span>
<span class="t c1" style="left:335.3px;top:879px;font-size:13px;line-height:15px;color:#111;letter-spacing:-0.080px;">Dodavatel - školení 10</span>
<span class="t c2" style="left:491.4px;top:879px;font-size:13px;line-height:15px;color:#111;letter-spacing:-0.030px;">14707420</span>
<span class="t c3" style="left:591.5px;top:879px;font-size:13px;line-height:15px;color:#111;letter-spacing:-0.136px;">15. 5. 2025 10:14</span>
<span class="t c4" style="left:741.2px;top:879px;font-size:13px;line-height:15px;color:#111;letter-spacing:-0.492px;">Otevírání zahájeno</span>
<span class="t c0" style="left:256.2px;top:904px;font-size:13px;line-height:15px;color:#111;letter-spacing:0.070px;">011</span>
<span class="t c1" style="left:335.3px;top:904px;font-size:13px;line-height:15px;color:#111;letter-spacing:-0.080px;">Dodavatel - školení 3</span>
<span class="t c2" style="left:491.4px;top:904px;font-size:13px;line-height:15px;color:#111;letter-spacing:-0.030px;">12345678</span>
<span class="t c3" style="left:591.5px;top:904px;font-size:13px;line-height:15px;color:#111;letter-spacing:-0.136px;">15. 5. 2025 9:58</span>
<span class="t c4" style="left:741.2px;top:904px;font-size:13px;line-height:15px;color:#111;letter-spacing:-0.492px;">Otevírání zahájeno</span>
</div>
</body></html>
